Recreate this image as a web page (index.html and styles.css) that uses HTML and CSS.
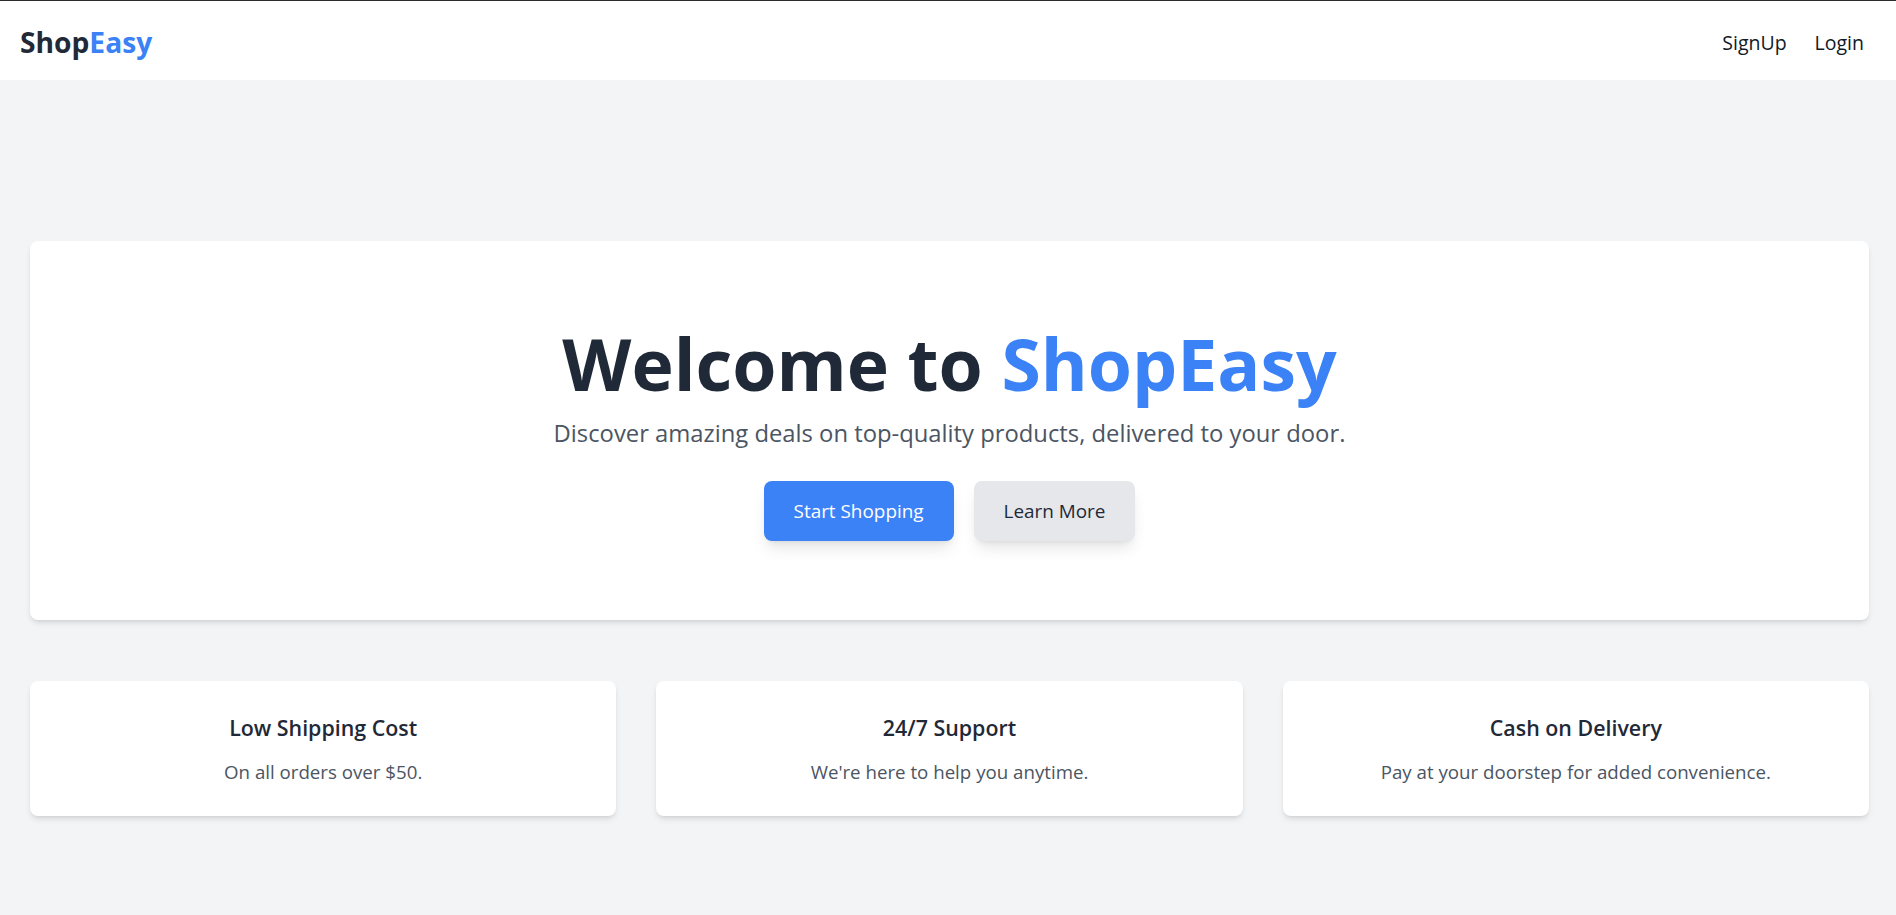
FILE: index.html
```html
<!DOCTYPE html>
<html lang="en">
<head>
<meta charset="utf-8">
<title>ShopEasy</title>
<link rel="stylesheet" href="styles.css">
</head>
<body>
<header class="topbar">
  <div class="logo">Shop<span class="accent">Easy</span></div>
  <nav class="nav">
    <a class="nav-link" href="#">SignUp</a>
    <a class="nav-link" href="#">Login</a>
  </nav>
</header>
<main class="main">
  <section class="hero">
    <h1 class="hero-title">Welcome to <span class="accent">ShopEasy</span></h1>
    <p class="hero-sub">Discover amazing deals on top-quality products, delivered to your door.</p>
    <div class="hero-actions">
      <a class="btn btn-primary" href="#">Start Shopping</a>
      <a class="btn btn-secondary" href="#">Learn More</a>
    </div>
  </section>
  <section class="features">
    <div class="feature">
      <h3 class="feature-title">Low Shipping Cost</h3>
      <p class="feature-text">On all orders over $50.</p>
    </div>
    <div class="feature">
      <h3 class="feature-title">24/7 Support</h3>
      <p class="feature-text">We're here to help you anytime.</p>
    </div>
    <div class="feature">
      <h3 class="feature-title">Cash on Delivery</h3>
      <p class="feature-text">Pay at your doorstep for added convenience.</p>
    </div>
  </section>
</main>
</body>
</html>
```
FILE: styles.css
```css
* { box-sizing: border-box; }
html, body { margin: 0; padding: 0; }
body {
  background: #f3f4f6;
  font-family: "Open Sans", "Noto Sans", sans-serif;
  color: #1f2937;
  min-height: 915px;
}
.accent { color: #3b82f6; }
.topbar {
  height: 80px;
  border-top: 1px solid #2b2b2b;
  background: #fff;
  display: flex;
  align-items: center;
  justify-content: space-between;
  padding: 0 32px 0 20px;
}
.logo {
  font-size: 28.2px;
  line-height: 36px;
  font-weight: 700;
  color: #1f2937;
  padding-top: 2px;
}
.nav { display: flex; gap: 28px; padding-top: 4px; }
.nav-link { font-size: 19.5px; line-height: 28px; color: #111827; text-decoration: none; }
.main { padding: 161px 27px 64px 30px; }
.hero {
  background: #fff;
  border-radius: 8px;
  box-shadow: 0 4px 6px -1px rgba(0,0,0,.1), 0 2px 4px -2px rgba(0,0,0,.1);
  padding: 80px 20px 79px;
  text-align: center;
}
.hero-title {
  margin: 0;
  padding-top: 4px;
  font-size: 71.5px;
  line-height: 77px;
  font-weight: 700;
  color: #1f2937;
}
.hero-sub { margin: 15px 0 0; font-size: 23.8px; line-height: 32px; color: #4b5563; }
.hero-actions { margin-top: 32px; display: flex; justify-content: center; gap: 20px; }
.btn {
  display: inline-block;
  font-size: 18.9px;
  line-height: 28px;
  padding: 16px 30px;
  border-radius: 8px;
  text-decoration: none;
  box-shadow: 0 10px 15px -3px rgba(0,0,0,.1), 0 4px 6px -4px rgba(0,0,0,.1);
}
.btn-primary { background: #3b82f6; color: #fff; }
.btn-secondary { background: #e5e7eb; color: #1f2937; }
.features {
  margin-top: 61px;
  display: grid;
  grid-template-columns: repeat(3, 1fr);
  gap: 40px;
}
.feature {
  background: #fff;
  border-radius: 8px;
  box-shadow: 0 4px 6px -1px rgba(0,0,0,.1), 0 2px 4px -2px rgba(0,0,0,.1);
  padding: 33px 20px 30px;
  text-align: center;
}
.feature-title { margin: 0; font-size: 21.4px; line-height: 28px; font-weight: 600; color: #1f2937; }
.feature-text { margin: 16px 0 0; font-size: 18.7px; line-height: 28px; color: #4b5563; }
```
